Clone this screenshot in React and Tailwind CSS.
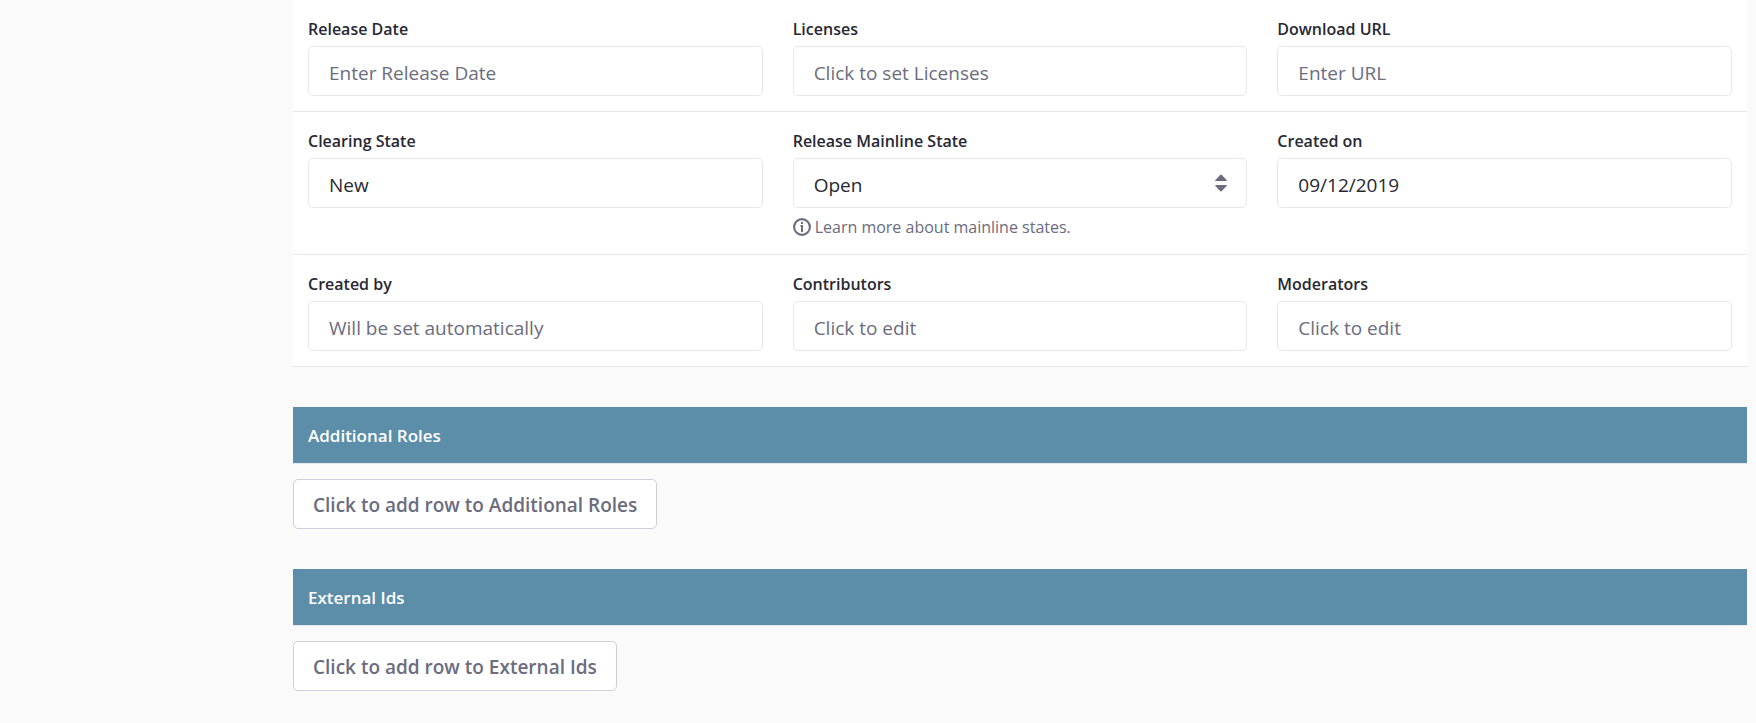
import React from "react";

const control =
  "block h-[50px] w-full rounded-[5px] border border-[#e7e7ed] bg-white px-5 pt-1.5 pb-0.5 text-[19px] leading-6 text-[#272833] outline-none placeholder:text-[#6b6c7e] placeholder:opacity-100 focus:border-[#5c8da9]";

function Field({ id, label, children }) {
  return (
    <div className="min-w-0 px-[15px] pb-[15px] pt-[17px]">
      <label htmlFor={id} className="mb-[5px] block text-base font-semibold leading-6 text-[#272833]">
        {label}
      </label>
      {children}
    </div>
  );
}

function TextField({ id, label, ...rest }) {
  return (
    <Field id={id} label={label}>
      <input id={id} type="text" className={control} {...rest} />
    </Field>
  );
}

function Row({ children }) {
  return <div className="grid grid-cols-3 border-b border-[#e7e7ed]">{children}</div>;
}

function InfoIcon() {
  return (
    <svg viewBox="0 0 18 18" className="size-[18px] shrink-0" aria-hidden="true">
      <circle cx="9" cy="9" r="7.9" fill="none" stroke="#6b6c7e" strokeWidth="2.1" />
      <circle cx="9" cy="4.9" r="1.2" fill="#6b6c7e" />
      <path d="M7.4 7.1H10v7H8V8.4h-.6z" fill="#6b6c7e" />
    </svg>
  );
}

function CaretDouble() {
  return (
    <svg
      viewBox="0 0 12 18"
      className="pointer-events-none absolute right-5 top-4 h-[18px] w-3"
      aria-hidden="true"
    >
      <path
        d="M5.4.7a.9.9 0 0 1 1.2 0l5 5.3c.5.5.2 1-.4 1H.8c-.6 0-.9-.5-.4-1zM5.4 17.3a.9.9 0 0 0 1.2 0l5-5.3c.5-.5.2-1-.4-1H.8c-.6 0-.9.5-.4 1z"
        fill="#6b6c7e"
      />
    </svg>
  );
}

function RowSection({ title }) {
  return (
    <section className="mt-10">
      <h2 className="border-b border-[#e7e7ed] bg-[#5c8da9] px-[15px] pb-[15px] pt-[17px] text-[17px] font-semibold leading-6 text-white">
        {title}
      </h2>
      <button
        type="button"
        className="mt-[15px] block h-[50px] cursor-pointer rounded-[5px] border border-[#cdced9] bg-white px-[19px] pt-0.5 text-[19px] font-semibold leading-6 text-[#6b6c7e]"
      >
        Click to add row to {title}
      </button>
    </section>
  );
}

export default function App() {
  return (
    <main className="min-h-screen bg-[#fafafa] pb-8 pl-[293px] pr-[9px] font-['Open_Sans','Noto_Sans',sans-serif]">
      <form className="bg-white">
        <Row>
          <TextField id="releaseDate" label="Release Date" placeholder="Enter Release Date" />
          <TextField id="licenses" label="Licenses" placeholder="Click to set Licenses" />
          <TextField id="downloadUrl" label="Download URL" placeholder="Enter URL" />
        </Row>
        <Row>
          <TextField id="clearingState" label="Clearing State" defaultValue="New" />
          <Field id="mainlineState" label="Release Mainline State">
            <div className="relative">
              <select id="mainlineState" defaultValue="Open" className={`${control} appearance-none`}>
                <option>Open</option>
                <option>Mainline</option>
                <option>Specific</option>
                <option>Phaseout</option>
                <option>Denied</option>
              </select>
              <CaretDouble />
            </div>
            <div className="flex items-center gap-1 pt-[7px] text-base leading-6 text-[#6b6c7e]">
              <InfoIcon />
              <span>Learn more about mainline states.</span>
            </div>
          </Field>
          <TextField id="createdOn" label="Created on" defaultValue="09/12/2019" />
        </Row>
        <Row>
          <TextField id="createdBy" label="Created by" placeholder="Will be set automatically" />
          <TextField id="contributors" label="Contributors" placeholder="Click to edit" />
          <TextField id="moderators" label="Moderators" placeholder="Click to edit" />
        </Row>
      </form>
      <RowSection title="Additional Roles" />
      <RowSection title="External Ids" />
    </main>
  );
}
